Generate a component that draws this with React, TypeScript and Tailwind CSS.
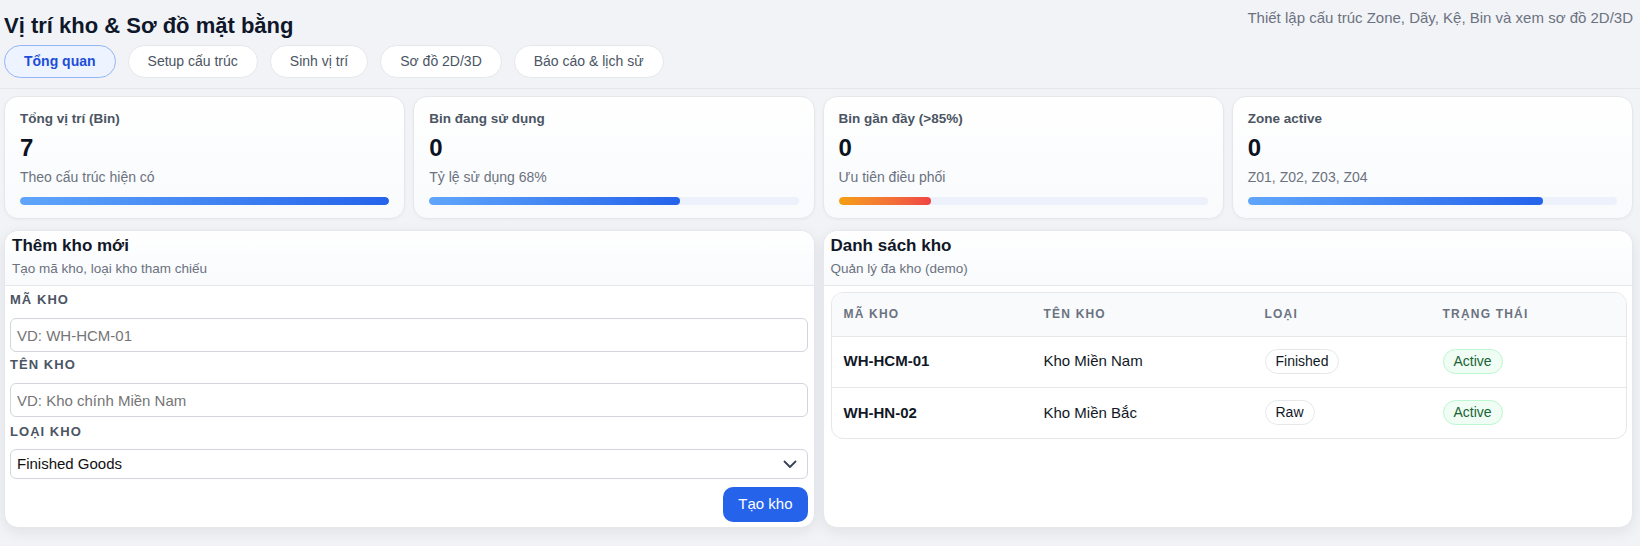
import React from "react";

const tabs = ["Tổng quan", "Setup cấu trúc", "Sinh vị trí", "Sơ đồ 2D/3D", "Báo cáo & lịch sử"];

const stats = [
  { label: "Tổng vị trí (Bin)", value: "7", sub: "Theo cấu trúc hiện có", pct: 100, orange: false },
  { label: "Bin đang sử dụng", value: "0", sub: "Tỷ lệ sử dụng 68%", pct: 68, orange: false },
  { label: "Bin gần đầy (>85%)", value: "0", sub: "Ưu tiên điều phối", pct: 25, orange: true },
  { label: "Zone active", value: "0", sub: "Z01, Z02, Z03, Z04", pct: 80, orange: false },
];

const rows = [
  { code: "WH-HCM-01", name: "Kho Miền Nam", type: "Finished" },
  { code: "WH-HN-02", name: "Kho Miền Bắc", type: "Raw" },
];

function PanelHeader({ title, sub }: { title: string; sub: string }) {
  return (
    <div className="px-[7px] pt-[3px] pb-[7px] border-b border-[#e5e7eb] bg-linear-to-b from-white to-[#f8fafc] rounded-t-[14px]">
      <div className="text-[17px] leading-[24px] font-bold text-[#111827]">{title}</div>
      <div className="mt-[2px] text-[13.5px] leading-[18px] text-[#6b7280]">{sub}</div>
    </div>
  );
}

export default function App() {
  return (
    <div className="min-h-[546px] bg-[#f2f3f7] font-['Liberation_Sans',Arial,sans-serif] text-[#111827]">
      <header className="pt-2 pl-1 pr-[7px] pb-[10px] border-b border-[#e5e7eb]">
        <div className="flex justify-between items-start">
          <h1 className="mt-1 text-[22px] leading-[28px] font-bold text-[#0f172a]">Vị trí kho &amp; Sơ đồ mặt bằng</h1>
          <div className="text-[15px] leading-5 text-[#6b7280]">Thiết lập cấu trúc Zone, Dãy, Kệ, Bin và xem sơ đồ 2D/3D</div>
        </div>
        <nav className="mt-[5px] flex gap-3">
          {tabs.map((t, i) => (
            <div
              key={t}
              className={
                i === 0
                  ? "h-[33px] px-[19px] flex items-center rounded-full border border-[#93b4f7] bg-[#eef4ff] text-[14px] font-bold text-[#1d4ed8]"
                  : "h-[33px] px-[19px] flex items-center rounded-full border border-[#e5e7eb] bg-white text-[14px] text-[#4b5563]"
              }
            >
              {t}
            </div>
          ))}
        </nav>
      </header>

      <main className="pl-1 pr-[7px]">
        <section className="mt-[7px] grid grid-cols-4 gap-2">
          {stats.map((s) => (
            <div
              key={s.label}
              className="rounded-[14px] border border-[#e5e7eb] bg-linear-to-b from-white to-[#f8fafc] px-[15px] pt-[13px] pb-[13px] shadow-[0_1px_3px_rgba(15,23,42,0.04)]"
            >
              <div className="text-[13.5px] leading-[18px] font-bold text-[#4b5563]">{s.label}</div>
              <div className="mt-[4px] text-[24px] leading-[32px] font-bold text-[#0b1220]">{s.value}</div>
              <div className="mt-[3px] text-[14px] leading-5 text-[#6b7280]">{s.sub}</div>
              <div className="mt-[10px] h-2 rounded-full bg-[#edf1fb] overflow-hidden">
                <div
                  className={
                    s.orange
                      ? "h-full rounded-full bg-linear-to-r from-[#f59e0b] to-[#ef4444]"
                      : "h-full rounded-full bg-linear-to-r from-[#60a5fa] to-[#2563eb]"
                  }
                  style={{ width: `${s.pct}%` }}
                />
              </div>
            </div>
          ))}
        </section>

        <section className="mt-[11px] grid grid-cols-2 gap-2">
          <div className="rounded-[14px] border border-[#e5e7eb] bg-white shadow-[0_4px_14px_rgba(15,23,42,0.08)]">
            <PanelHeader title="Thêm kho mới" sub="Tạo mã kho, loại kho tham chiếu" />
            <div className="pl-[5px] pr-[6px] pt-[5px] pb-[5px] flex flex-col">
              <label className="text-[13px] leading-[18px] font-bold uppercase tracking-[0.08em] text-[#4b5563]">Mã kho</label>
              <input
                placeholder="VD: WH-HCM-01"
                className="mt-[9px] h-[34px] w-full rounded-[6px] border border-[#d1d5db] px-1.5 text-[15px] bg-white placeholder:text-[#757575] outline-none"
              />
              <label className="mt-[4px] text-[13px] leading-[18px] font-bold uppercase tracking-[0.08em] text-[#4b5563]">Tên kho</label>
              <input
                placeholder="VD: Kho chính Miền Nam"
                className="mt-[9px] h-[34px] w-full rounded-[6px] border border-[#d1d5db] px-1.5 text-[15px] bg-white placeholder:text-[#757575] outline-none"
              />
              <label className="mt-[6px] text-[13px] leading-[18px] font-bold uppercase tracking-[0.08em] text-[#4b5563]">Loại kho</label>
              <div className="mt-[8px] h-[30px] w-full rounded-[6px] border border-[#d1d5db] bg-white px-1.5 flex items-center justify-between">
                <span className="text-[15px] text-[#111111]">Finished Goods</span>
                <svg width="14" height="9" viewBox="0 0 14 9" className="mr-[4px]">
                  <path d="M1.5 1.5 L7 7 L12.5 1.5" fill="none" stroke="#374151" strokeWidth="1.8" strokeLinecap="round" strokeLinejoin="round" />
                </svg>
              </div>
              <div className="mt-[8px] flex justify-end">
                <button className="h-[35px] px-[15px] rounded-[10px] bg-[#2563eb] text-white text-[15px]">Tạo kho</button>
              </div>
            </div>
          </div>

          <div className="rounded-[14px] border border-[#e5e7eb] bg-white shadow-[0_4px_14px_rgba(15,23,42,0.08)]">
            <PanelHeader title="Danh sách kho" sub="Quản lý đa kho (demo)" />
            <div className="pl-[7px] pr-[5px] pt-[6px]">
              <div className="rounded-[12px] border border-[#e5e7eb] overflow-hidden">
                <table className="w-full table-fixed border-collapse">
                  <colgroup>
                    <col className="w-[200px]" />
                    <col className="w-[221px]" />
                    <col className="w-[178px]" />
                    <col />
                  </colgroup>
                  <thead>
                    <tr className="bg-[#f8fafc] h-[43px]">
                      {["Mã kho", "Tên kho", "Loại", "Trạng thái"].map((h) => (
                        <th key={h} className="pl-3 text-left text-[12px] font-bold uppercase tracking-[0.1em] text-[#6b7280]">
                          {h}
                        </th>
                      ))}
                    </tr>
                  </thead>
                  <tbody>
                    {rows.map((r) => (
                      <tr key={r.code} className="h-[51px] border-t border-[#e5e7eb]">
                        <td className="pl-3 text-[15px] font-bold text-[#111827]">{r.code}</td>
                        <td className="pl-3 text-[15px] text-[#111827]">{r.name}</td>
                        <td className="pl-3">
                          <span className="inline-block rounded-full border border-[#e5e7eb] bg-white px-2.5 py-0.5 text-[14px] leading-[19px] text-[#111827]">
                            {r.type}
                          </span>
                        </td>
                        <td className="pl-3">
                          <span className="inline-block rounded-full border border-[#bbf7d0] bg-[#f0fdf4] px-2.5 py-0.5 text-[14px] leading-[19px] text-[#166534]">
                            Active
                          </span>
                        </td>
                      </tr>
                    ))}
                  </tbody>
                </table>
              </div>
            </div>
          </div>
        </section>
      </main>
    </div>
  );
}
